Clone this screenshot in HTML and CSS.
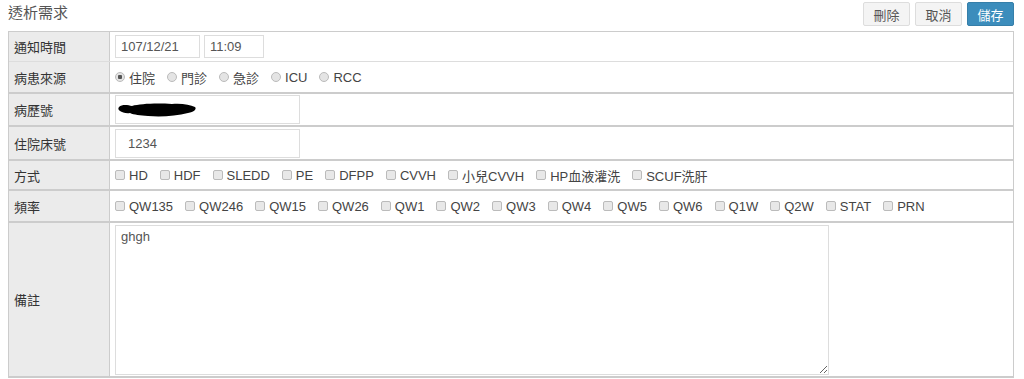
FILE: index.html
```html
<!DOCTYPE html>
<html>
<head>
  <title>透析需求</title>
  <link rel="stylesheet" href="styles.css">
</head>
<body>
  <div class="header">
    <h1>透析需求</h1>
    <div class="actions">
      <button type="button" class="btn">刪除</button>
      <button type="button" class="btn">取消</button>
      <button type="button" class="btn btn-save">儲存</button>
    </div>
  </div>

  <form class="sheet">
    <div class="row r1">
      <div class="label">通知時間</div>
      <div class="field">
        <input type="text" class="txt date" value="107/12/21">
        <input type="text" class="txt time" value="11:09">
      </div>
    </div>

    <div class="row r2">
      <div class="label">病患來源</div>
      <div class="field opts">
        <label><input type="radio" name="src" checked> 住院</label>
        <label><input type="radio" name="src"> 門診</label>
        <label><input type="radio" name="src"> 急診</label>
        <label><input type="radio" name="src"> ICU</label>
        <label><input type="radio" name="src"> RCC</label>
      </div>
    </div>

    <div class="row r3">
      <div class="label">病歷號</div>
      <div class="field">
        <div class="txt wide redacted">
          <!-- 塗黑的病歷號 -->
          <svg width="80" height="16" viewBox="0 0 80 16">
            <path d="M1 5 C4 2 10 3 14 4 C22 2 36 1 54 2 C64 1 72 3 77 5 C79 7 76 10 70 11 C58 14 44 15 30 14 C22 13 16 13 12 11 C8 12 4 10 2 9 C0 8 0 6 1 5 Z" fill="#000"/>
          </svg>
        </div>
      </div>
    </div>

    <div class="row r4">
      <div class="label">住院床號</div>
      <div class="field">
        <input type="text" class="txt wide bed" value="1234">
      </div>
    </div>

    <div class="row r5">
      <div class="label">方式</div>
      <div class="field opts">
        <label><input type="checkbox"> HD</label>
        <label><input type="checkbox"> HDF</label>
        <label><input type="checkbox"> SLEDD</label>
        <label><input type="checkbox"> PE</label>
        <label><input type="checkbox"> DFPP</label>
        <label><input type="checkbox"> CVVH</label>
        <label><input type="checkbox"> 小兒CVVH</label>
        <label><input type="checkbox"> HP血液灌洗</label>
        <label><input type="checkbox"> SCUF洗肝</label>
      </div>
    </div>

    <div class="row r6">
      <div class="label">頻率</div>
      <div class="field opts">
        <label><input type="checkbox"> QW135</label>
        <label><input type="checkbox"> QW246</label>
        <label><input type="checkbox"> QW15</label>
        <label><input type="checkbox"> QW26</label>
        <label><input type="checkbox"> QW1</label>
        <label><input type="checkbox"> QW2</label>
        <label><input type="checkbox"> QW3</label>
        <label><input type="checkbox"> QW4</label>
        <label><input type="checkbox"> QW5</label>
        <label><input type="checkbox"> QW6</label>
        <label><input type="checkbox"> Q1W</label>
        <label><input type="checkbox"> Q2W</label>
        <label><input type="checkbox"> STAT</label>
        <label><input type="checkbox"> PRN</label>
      </div>
    </div>

    <div class="row r7">
      <div class="label">備註</div>
      <div class="field memo">
        <textarea class="note">ghgh</textarea>
      </div>
    </div>
  </form>
</body>
</html>
```

FILE: styles.css
```css
body { margin: 0; font-family: "Liberation Sans", "Noto Sans CJK TC", Arial, sans-serif; font-size: 13px; color: #333; background: #fff; }

.header { display: flex; justify-content: space-between; align-items: flex-start; height: 29px; padding: 2px 10px 0 8px; }
h1 { margin: 0; font-size: 15px; font-weight: normal; color: #555; line-height: 24px; margin-top: -1px; }
.actions { display: flex; gap: 5px; }
.btn { width: 47px; height: 24px; padding: 0; font-family: inherit; font-size: 13px; color: #555; background: #f4f4f4;
       border: 1px solid #ddd; border-radius: 2px; cursor: pointer; }
.btn-save { background: #3c8dbc; border-color: #367fa9; color: #fff; }

.sheet { margin: 0 10px 0 8px; border: 1px solid #ccc; border-bottom-width: 2px; }
.row { display: grid; grid-template-columns: 101px 1fr; border-bottom: 2px solid #ccc; }
.row:last-child { border-bottom: none; }
.r1 { height: 29px; border-bottom-width: 1px; border-color: #ddd; }
.r2 { height: 30px; }
.r3 { height: 31px; }
.r4 { height: 32px; }
.r5 { height: 28px; }
.r6 { height: 30px; }
.r7 { height: 153px; }

.label { display: flex; align-items: center; padding-left: 5px; background: #ebebeb; border-right: 1px solid #ccc; color: #333; }
.field { display: flex; align-items: center; padding: 0 5px; gap: 4px; }

.txt { box-sizing: border-box; height: 23px; padding: 0 5px; border: 1px solid #ddd; font-family: inherit; font-size: 13px; color: #555; background: #fff; }
.date { width: 85px; }
.time { width: 60px; }
.wide { width: 185px; height: 29px; }
.bed { padding-left: 12px; }
.redacted { display: flex; align-items: center; padding-left: 2px; }

.opts { gap: 12px; color: #444; }
.opts label { display: flex; align-items: center; gap: 4px; white-space: nowrap; }
.opts input { appearance: none; -webkit-appearance: none; margin: 0; width: 10px; height: 10px; box-sizing: border-box;
              border: 1px solid #bbb; background: #e8e8e8; border-radius: 2px; }
.opts input[type=radio] { border-radius: 50%; background: #e4e4e4; }
.opts input[type=radio]:checked { background: radial-gradient(circle, #555 0 2px, #e4e4e4 2.5px); }

.memo { align-items: flex-start; padding-top: 2px; }
.note { box-sizing: border-box; width: 714px; height: 150px; margin: 0; padding: 3px 5px; border: 1px solid #ddd;
        font-family: inherit; font-size: 13px; color: #555; resize: both; }
```
